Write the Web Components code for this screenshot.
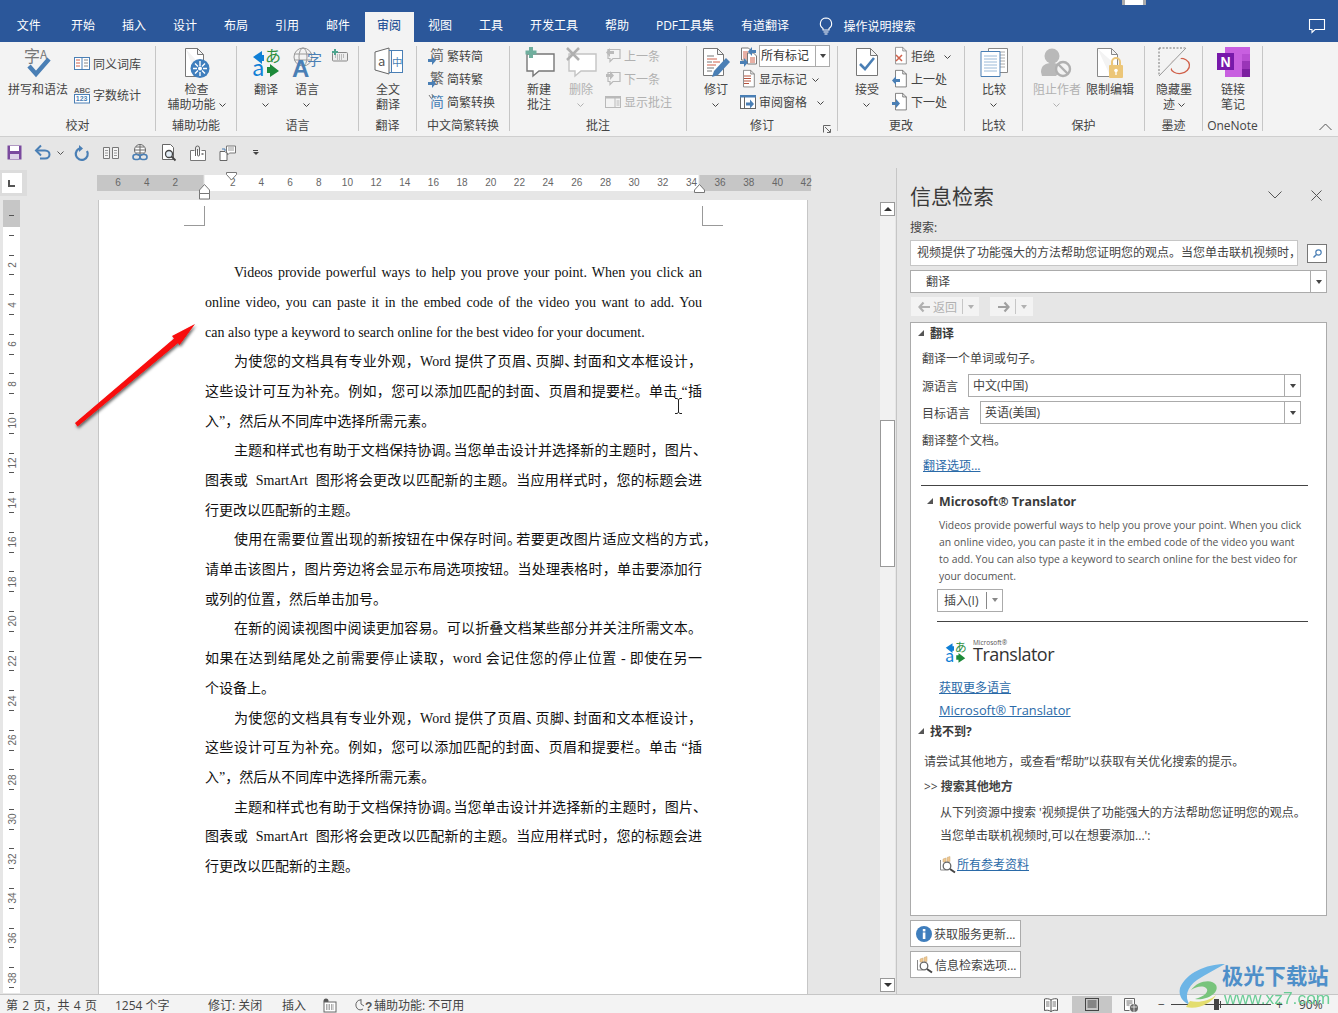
<!DOCTYPE html>
<html lang="zh">
<head>
<meta charset="utf-8">
<title>Word</title>
<style>
  html, body { margin: 0; padding: 0; background: #e6e6e6; }
  body { width: 1338px; height: 1013px; overflow: hidden; font: 12px "Open Sans", "Noto Sans CJK SC", sans-serif; color: #444; }
  /* Word squeezes some punctuation in a justified line */
  .c { letter-spacing: -5px; }
  .c6 { letter-spacing: -6px; }
  .w { margin: 0 4px; }
</style>
</head>
<body>
<word-app>
  <word-tabs></word-tabs>
  <word-ribbon>
    <rb-group w="156" label="校对" pad="8">
      <rb-big w="60" icon="spell" iw="28" ih="32">拼写和语法</rb-big>
      <rb-col style="margin:8px 0 0 6px;gap:8px">
        <rb-small icon="thes">同义词库</rb-small>
        <rb-small icon="abc">字数统计</rb-small>
      </rb-col>
    </rb-group>
    <rb-group w="81" label="辅助功能">
      <rb-big w="80" icon="access" iw="26" ih="32">检查<br>辅助功能 <rb-chev></rb-chev></rb-big>
    </rb-group>
    <rb-group w="122" label="语言" pad="2">
      <rb-big w="54" icon="translate" iw="28" ih="30">翻译<br><rb-chev></rb-chev></rb-big>
      <rb-big w="28" icon="language" iw="32" ih="31">语言<br><rb-chev></rb-chev></rb-big>
      <rb-icon name="keyboard" w="16" h="13" style="margin:5px 0 0 11px"></rb-icon>
    </rb-group>
    <rb-group w="58" label="翻译">
      <rb-big w="57" icon="fulltext" iw="29" ih="29">全文<br>翻译</rb-big>
    </rb-group>
    <rb-group w="93" label="中文简繁转换" pad="11">
      <rb-col>
        <rb-small icon="jian">繁转简</rb-small>
        <rb-small icon="fan">简转繁</rb-small>
        <rb-small icon="jian2">简繁转换</rb-small>
      </rb-col>
    </rb-group>
    <rb-group w="177" label="批注" pad="4">
      <rb-big w="50" icon="newc" iw="31" ih="30">新建<br>批注</rb-big>
      <rb-big w="34" icon="delc" iw="31" ih="30" disabled>删除<br><rb-chev></rb-chev></rb-big>
      <rb-col style="margin-left:7px">
        <rb-small icon="prevc" disabled>上一条</rb-small>
        <rb-small icon="nextc" disabled>下一条</rb-small>
        <rb-small icon="showc" disabled>显示批注</rb-small>
      </rb-col>
    </rb-group>
    <rb-group w="151" label="修订" pad="9" launcher>
      <rb-big w="40" icon="track" iw="28" ih="32">修订<br><rb-chev></rb-chev></rb-big>
      <rb-col style="margin-left:4px">
        <rb-small icon="markup"><rb-drop>所有标记</rb-drop></rb-small>
        <rb-small icon="showm">显示标记<rb-chev style="margin-left:5px"></rb-chev></rb-small>
        <rb-small icon="rpane">审阅窗格<rb-chev style="margin-left:10px"></rb-chev></rb-small>
      </rb-col>
    </rb-group>
    <rb-group w="127" label="更改" pad="9">
      <rb-big w="40" icon="accept" iw="24" ih="30">接受<br><rb-chev></rb-chev></rb-big>
      <rb-col style="margin-left:5px">
        <rb-small icon="reject">拒绝<rb-chev style="margin-left:9px"></rb-chev></rb-small>
        <rb-small icon="prevd">上一处</rb-small>
        <rb-small icon="nextd">下一处</rb-small>
      </rb-col>
    </rb-group>
    <rb-group w="58" label="比较">
      <rb-big w="57" icon="compare" iw="28" ih="30">比较<br><rb-chev></rb-chev></rb-big>
    </rb-group>
    <rb-group w="122" label="保护" pad="9">
      <rb-big w="50" icon="block" iw="32" ih="32" disabled>阻止作者<br><rb-chev></rb-chev></rb-big>
      <rb-big w="56" icon="restrict" iw="28" ih="32">限制编辑</rb-big>
    </rb-group>
    <rb-group w="58" label="墨迹">
      <rb-big w="57" icon="ink" iw="32" ih="30">隐藏墨<br>迹 <rb-chev></rb-chev></rb-big>
    </rb-group>
    <rb-group w="60" label="OneNote">
      <rb-big w="59" icon="onenote" iw="33" ih="30">链接<br>笔记</rb-big>
    </rb-group>
  </word-ribbon>
  <word-qat></word-qat>
  <word-main>
    <doc-area>
      <doc-line indent>Videos provide powerful ways to help you prove your point. When you click an</doc-line>
      <doc-line>online video, you can paste it in the embed code of the video you want to add. You</doc-line>
      <doc-line last>can also type a keyword to search online for the best video for your document.</doc-line>
      <doc-line indent>为使您的文档具有专业外观，Word 提供了页眉<span class="c">、</span>页脚<span class="c">、</span>封面和文本框设计，</doc-line>
      <doc-line>这些设计可互为补充。例如，您可以添加匹配的封面、页眉和提要栏。单击 “插</doc-line>
      <doc-line last>入”，然后从不同库中选择所需元素。</doc-line>
      <doc-line indent>主题和样式也有助于文档保持协调<span class="c6">。</span>当您单击设计并选择新的主题时，图片<span class="c">、</span></doc-line>
      <doc-line>图表或<span class="w"> SmartArt </span>图形将会更改以匹配新的主题。当应用样式时，您的标题会进</doc-line>
      <doc-line last>行更改以匹配新的主题。</doc-line>
      <doc-line indent wide>使用在需要位置出现的新按钮在中保存时间<span class="c">。</span>若要更改图片适应文档的方式，</doc-line>
      <doc-line>请单击该图片，图片旁边将会显示布局选项按钮。当处理表格时，单击要添加行</doc-line>
      <doc-line last>或列的位置，然后单击加号。</doc-line>
      <doc-line indent>在新的阅读视图中阅读更加容易。可以折叠文档某些部分并关注所需文本。</doc-line>
      <doc-line>如果在达到结尾处之前需要停止读取，word 会记住您的停止位置 - 即使在另一</doc-line>
      <doc-line last>个设备上。</doc-line>
      <doc-line indent>为使您的文档具有专业外观，Word 提供了页眉<span class="c">、</span>页脚<span class="c">、</span>封面和文本框设计，</doc-line>
      <doc-line>这些设计可互为补充。例如，您可以添加匹配的封面、页眉和提要栏。单击 “插</doc-line>
      <doc-line last>入”，然后从不同库中选择所需元素。</doc-line>
      <doc-line indent>主题和样式也有助于文档保持协调<span class="c6">。</span>当您单击设计并选择新的主题时，图片<span class="c">、</span></doc-line>
      <doc-line>图表或<span class="w"> SmartArt </span>图形将会更改以匹配新的主题。当应用样式时，您的标题会进</doc-line>
      <doc-line last>行更改以匹配新的主题。</doc-line>
    </doc-area>
    <research-pane></research-pane>
  </word-main>
  <word-status></word-status>
</word-app>

<script>
// all icons drawn by hand, name -> [viewBox w, viewBox h, content]
const blue = '#4a7fb5', grey = '#777', light = '#b9b9b9'
const page = (c = grey) => `<path d="M3.5 .5h10l5 5v18h-15z M13.5 .5v5h5" fill="#fff" stroke="${c}"/>`
const arrowR = (x, y, c = blue) => `<path d="M${x} ${y}h4v-3l4 4.5-4 4.5v-3h-4z" fill="${c}"/>`
const arrowL = (x, y, c = blue) => `<path d="M${x + 8} ${y}h-4v-3l-4 4.5 4 4.5v-3h4z" fill="${c}"/>`
const bubble = (c) => `<path d="M3 8h27v17H15l-6 5v-5H3z" transform="translate(0 -1)" fill="#fff" stroke="${c}" stroke-width="1.4"/>`
const miniBubble = (c) => `<path d="M3 1.5h12v9H8l-3 3v-3H3z" fill="#f3f3f3" stroke="${c}" stroke-width="1.2"/>`
const translateGlyphs = `<path d="M1 10l9-6v4h2v6h-2v3z" fill="#0f7fd6"/><text x="13" y="15" font-size="16" fill="#2f8f3f">あ</text><text x="0" y="29" font-size="22" fill="#0f7fd6">a</text><path d="M27 24l-9 6v-4h-3v-6h3v-3z" fill="#1d8a3a"/>`

const ICONS = {
  spell: [28, 32, `<text x="0" y="15" font-size="16" fill="#777">字</text><text x="16" y="12" font-size="12" fill="#777">A</text><path d="M5 19l7 8L25 12" fill="none" stroke="${blue}" stroke-width="4.4"/>`],
  thes: [16, 16, `<rect x=".5" y="1.5" width="15" height="12" fill="#fff" stroke="${blue}"/><path d="M8 1.5v12" stroke="${blue}"/><path d="M2 4h4M2 7h4M2 10h4" stroke="#d0604a"/><path d="M10 4h4M10 7h4M10 10h4" stroke="#888"/>`],
  abc: [16, 18, `<text x="0" y="7" font-size="7.5" font-weight="700" fill="#666" font-family="Liberation Sans">ABC</text><rect x=".5" y="8.5" width="15" height="8.5" fill="#fff" stroke="${blue}"/><text x="1.8" y="15.4" font-size="7" font-weight="700" fill="${blue}" font-family="Liberation Sans">123</text>`],
  access: [26, 32, `<path d="M1.5 1.5h12l6 6v14M1.5 1.5v28h11M13.5 1.5v6h6" fill="#fff" stroke="${grey}"/><circle cx="16" cy="21.500" r="9.500" fill="#3f7ebd"/><g stroke="#fff" stroke-width="1.400"><path d="M16 14v5M16 25v4M9 21.500h4M19 21.500h4M11 16.500l3 3M21 16.500l-3 3M11 26.500l3-3M21 26.500l-3-3"/></g><circle cx="16" cy="21.500" r="2" fill="#fff"/>`],
  translate: [28, 30, translateGlyphs],
  language: [32, 31, `<circle cx="12" cy="10" r="9" fill="none" stroke="#999"/><ellipse cx="12" cy="10" rx="4" ry="9" fill="none" stroke="#999"/><path d="M3 7h18M3 13h18" stroke="#999"/><text x="1" y="30" font-size="24" font-weight="700" fill="${blue}" font-family="Liberation Sans">A</text><text x="16" y="18" font-size="15" fill="${blue}">字</text>`],
  keyboard: [16, 13, `<rect x=".5" y="3.500" width="15" height="8.500" rx="1" fill="#eee" stroke="#888"/><path d="M3 6h10M3 8h10M5 10h6" stroke="#888" stroke-dasharray="1 1"/><path d="M3 0v6M0 3h6" stroke="#4fa58f" stroke-width="2"/>`],
  fulltext: [29, 29, `<path d="M1 5L15 1v26L1 23z" fill="#fff" stroke="#666"/><text x="4" y="19" font-size="13" fill="#555">a</text><rect x="17.500" y="3.500" width="11" height="22" fill="#fff" stroke="${blue}"/><path d="M15 3.500h3M15 25.500h3" stroke="${blue}"/><text x="18" y="19" font-size="10.500" fill="${blue}">中</text>`],
  jian: [16, 17, `<text x="2" y="13" font-size="14" fill="#666">简</text>${arrowR(0, 12)}`],
  fan: [16, 17, `<text x="2" y="13" font-size="14" fill="#666">繁</text>${arrowR(0, 12)}`],
  jian2: [16, 17, `<text x="2" y="14" font-size="14" fill="${blue}">简</text><path d="M1 2l2 3M4 1l1 4" stroke="#777"/>`],
  newc: [31, 30, bubble('#777') + `<path d="M7 0v11M1.500 5.500h11" stroke="#6fae9d" stroke-width="4"/>`],
  delc: [31, 30, bubble('#c4c4c4') + `<path d="M1 1l12 12M13 1L1 13" stroke="#b0b0b0" stroke-width="2.500"/>`],
  prevc: [16, 16, miniBubble(light) + arrowL(1, 3, '#bbb')],
  nextc: [16, 16, miniBubble(light) + arrowR(1, 3, '#bbb')],
  showc: [16, 16, `<rect x=".5" y="2.500" width="15" height="11" fill="#f3f3f3" stroke="${light}"/><rect x=".5" y="2.500" width="15" height="2" fill="${light}"/><path d="M10 4v9" stroke="${light}"/><path d="M11.500 7h3M11.500 9h3M11.500 11h3" stroke="${light}"/>`],
  track: [28, 32, `<path d="M1.500 1.500h14l6 6v21h-20zM15.500 1.500v6h6" fill="#fff" stroke="#777"/><path d="M5 9h7M5 15h5" stroke="#777"/><path d="M5 12h10M11 15h7M5 18h9" stroke="#d0604a"/><path d="M5 21h7M5 24h5" stroke="#777"/><path d="M10 30l2-6L24 11l4 4-12 13z" fill="${blue}"/>`],
  markup: [17, 18, `<path d="M1.500 1h7l3 3v9h-10z" fill="#fff" stroke="#777"/><path d="M3 5h5M3 7h5M3 9h5M3 11h5" stroke="#d0604a"/><path d="M7.500 6h6l3 3v8h-9z" fill="#fff" stroke="#777"/><path d="M10 11h5M10 13h5M10 15h5" stroke="#d0604a"/>${arrowL(8, 3)}${arrowR(0, 14)}`],
  showm: [16, 18, `<g transform="translate(1 0) scale(.72)">${page('#666')}</g><path d="M4 6h7M4 8.500h7M4 11h7M4 13.500h5" stroke="#b5523d"/>`],
  rpane: [16, 16, `<rect x=".5" y="1.500" width="15" height="13" fill="#fff" stroke="#666"/><rect x="0" y="1" width="16" height="2.500" fill="${blue}"/><path d="M4.500 3v11" stroke="#666"/>${arrowR(6, 8.500)}`],
  accept: [24, 30, `<path d="M1.500 1.500h14l7 7v20h-21zM15.500 1.500v7h7" fill="#fff" stroke="#777"/><path d="M5 17l5 5 9-11" fill="none" stroke="${blue}" stroke-width="2.600"/>`],
  reject: [16, 18, `<g transform="translate(1 0) scale(.72)">${page('#777')}</g><path d="M4 8l6 6M10 8l-6 6" stroke="#d0604a" stroke-width="1.500"/>`],
  prevd: [16, 18, `<g transform="translate(1 0) scale(.72)">${page('#555')}</g>${arrowL(0, 9)}`],
  nextd: [16, 18, `<g transform="translate(1 0) scale(.72)">${page('#555')}</g>${arrowR(0, 9)}`],
  compare: [28, 30, `<path d="M8.500 1.500h19v24h-19z" fill="#fff" stroke="#888"/><path d="M20 5h5M20 8h5M20 11h5M20 14h5M20 17h5M20 20h5" stroke="#aaa"/><path d="M1 4.500h19v25H1z" fill="#fff" stroke="${blue}"/><path d="M4 9h13M4 12h13M4 15h13M4 18h13M4 21h13M4 24h13" stroke="#9bbad8"/>`],
  block: [32, 32, `<circle cx="11" cy="9" r="7.500" fill="#b9b9b9"/><path d="M0 25c0-7 5-9 11-9s9 2 10 6l-6 7H1z" fill="#b9b9b9"/><circle cx="22" cy="22" r="7" fill="#f3f3f3" stroke="#b0b0b0" stroke-width="2.400"/><path d="M17 17l10 10" stroke="#b0b0b0" stroke-width="2.400"/>`],
  restrict: [28, 32, `<path d="M1.500 1.500h14l6 6v12M1.500 1.500v28h13M15.500 1.500v6h6" fill="#fff" stroke="#888"/><rect x="13" y="18" width="14" height="13" rx="1" fill="#ecc678"/><path d="M16 18v-3a4 4 0 018 0v3" fill="none" stroke="#ecc678" stroke-width="2"/><circle cx="20" cy="23.500" r="1.800" fill="#fff"/><path d="M20 24v4" stroke="#fff" stroke-width="1.300"/>`],
  ink: [32, 30, `<path d="M1 1h27M1 1v28" stroke="#777" stroke-dasharray="2 1.500" fill="none"/><ellipse cx="22" cy="19" rx="9.500" ry="7.500" fill="none" stroke="#d0604a" stroke-width="1.300" transform="rotate(-8 22 19)"/><path d="M2 30L29 2" stroke="#f3f3f3" stroke-width="4"/><path d="M1 29L28 1" stroke="#999"/>`],
  onenote: [33, 30, `<rect x="8" y="0" width="25" height="30" fill="#c85fe0"/><rect x="25" y="7" width="8" height="7" fill="#b84fd2"/><rect x="25" y="14" width="8" height="8" fill="#9a35b8"/><rect x="25" y="22" width="8" height="8" fill="#7c1fa0"/><rect x="0" y="6" width="17" height="17" fill="#7719aa"/><text x="3.500" y="19.500" font-size="14" font-weight="700" fill="#fff" font-family="Liberation Sans">N</text>`],
  save: [15, 15, `<path d="M.5.5h14v14H.5z" fill="#7a4a9e"/><rect x="3" y="1" width="9" height="5" fill="#fff"/><rect x="3" y="9" width="9" height="5" fill="#ded3e8"/>`],
  undo: [16, 15, `<path d="M1.500 5.500H10c6 0 6 8 0 8H5" fill="none" stroke="${blue}" stroke-width="2"/><path d="M6 .5L1 5.500l5 5" fill="none" stroke="${blue}" stroke-width="2"/>`],
  redo: [16, 16, `<path d="M7 3a6 6 0 106 3" fill="none" stroke="${blue}" stroke-width="2.200"/><path d="M9 0v7L5 3.500z" fill="${blue}" transform="rotate(180 7 3.500)"/>`],
  cols: [16, 14, `<path d="M.5 1.500h6v11h-6zM9.500 1.500h6v11h-6z" fill="#f5f5f5" stroke="#777"/><path d="M2 4.500h3M2 7h3M2 9.500h3M11 4.500h3M11 7h3M11 9.500h3" stroke="#999"/>`],
  globe: [16, 17, `<circle cx="8" cy="6" r="5.500" fill="#fff" stroke="#666"/><path d="M2.500 6h11M8 .5v11M4 3h8M4 9h8" stroke="#666"/><rect x="1" y="10.500" width="7" height="5" rx="2.500" fill="none" stroke="${blue}" stroke-width="1.600"/><rect x="8" y="10.500" width="7" height="5" rx="2.500" fill="none" stroke="${blue}" stroke-width="1.600"/>`],
  docfind: [16, 17, `<path d="M1.500 .5h8l3 3v12h-11z" fill="#fff" stroke="#666"/><circle cx="8" cy="10" r="3.500" fill="#e4eef7" stroke="#444" stroke-width="1.300"/><path d="M10.500 12.500l4 4" stroke="#444" stroke-width="1.800"/>`],
  clip: [16, 16, `<path d="M.5 5.500h4M11.500 5.500h4v10H.5v-10" fill="#fff" stroke="#777"/><path d="M5.500 11V3a2 2 0 014 0v7a1 1 0 01-2 0V4" fill="none" stroke="#666"/><rect x="11.500" y="8" width="2" height="2" fill="#888"/>`],
  cmtdoc: [17, 16, `<path d="M1 6.500h5l2 2v7H1z" fill="#fff" stroke="#666"/><path d="M7.500 1h9v7h-6l-2 2v-2h-1z" fill="#fff" stroke="#777"/><path d="M9 3h6M9 5h6" stroke="#999"/><path d="M3 4h3v2" fill="none" stroke="${blue}"/>`],
  proof: [14, 14, `<circle cx="3" cy="3" r="2.500" fill="#555"/><rect x="1" y="4" width="12" height="10" fill="#fff" stroke="#666"/><path d="M3 7h8M3 9h8M3 11h8" stroke="#555" stroke-dasharray="1.500 1"/>`],
  a11y: [18, 14, `<path d="M5 2a4.500 5 0 102 9" fill="none" stroke="#666"/><path d="M5 1v5l3 2" fill="none" stroke="#666"/><text x="9" y="13" font-size="12" font-weight="700" fill="#555" font-family="Liberation Sans">?</text>`],
  read: [14, 14, `<path d="M7 2C5 .5 2 .5 .5 1v11.500c2-.5 4.500-.5 6.500 1 2-1.500 4.500-1.500 6.500-1V1C12 .5 9 .5 7 2zM7 2v11.500" fill="#fff" stroke="#555"/><path d="M2 4h3.500M2 6h3.500M2 8h3.500M8.500 4H12M8.500 6H12M8.500 8H12" stroke="#777"/>`],
  layout: [14, 13, `<rect x=".5" y=".5" width="13" height="12" fill="none" stroke="#444"/><path d="M2.500 3h9M2.500 5h9M2.500 7h9M2.500 9h9" stroke="#444"/>`],
  web: [14, 14, `<path d="M.5.5h10v8M.5.5v12h5" fill="#fff" stroke="#666"/><path d="M2.500 3h6M2.500 5h6M2.500 7h3" stroke="#777"/><circle cx="10" cy="10" r="4" fill="#666"/><path d="M7 9h6M10 6v8" stroke="#fff" stroke-width=".7"/>`],
  refs: [17, 17, `<path d="M1.500 4v10h5" fill="none" stroke="#888"/><path d="M4 3l3-1v4H4zM8 1.500l3-1v5H8z" fill="#f0c890" stroke="#c9a97a" stroke-width=".5"/><circle cx="8" cy="10" r="3.800" fill="#fff" stroke="#666" stroke-width="1.300"/><path d="M11 13l5 3.500" stroke="#444" stroke-width="2"/>`],
  info: [16, 16, `<circle cx="8" cy="8" r="8" fill="#3f7ebd"/><rect x="6.800" y="6.500" width="2.600" height="6.500" fill="#fff"/><rect x="6.800" y="3" width="2.600" height="2.400" fill="#fff"/>`],
  bulb: [14, 18, `<path d="M7 1a5.700 5.700 0 00-3 10.500V13h6v-1.500A5.700 5.700 0 007 1z" fill="none" stroke="#fff" stroke-width="1.100"/><path d="M4.500 15h5M5.500 17h3" stroke="#fff" stroke-width="1.100"/>`],
  chat: [17, 15, `<path d="M.5.5h15v10H6l-3 3v-3H.5z" fill="none" stroke="#fff" stroke-width="1.100"/>`],
  search: [9, 9, `<circle cx="5.500" cy="3.500" r="2.700" fill="none" stroke="${blue}" stroke-width="1.200"/><path d="M3.500 5.500L.5 8.500" stroke="${blue}" stroke-width="1.500"/>`],
  back: [12, 10, `<path d="M5.500 .5L1.500 5l4 4.500M2 5h10" fill="none" stroke="#b1b1b1" stroke-width="2.200"/>`],
  fwd: [12, 10, `<path d="M6.500 .5l4 4.500-4 4.500M10 5H0" fill="none" stroke="#a0a0a0" stroke-width="2.200"/>`]
}

class RbIcon extends HTMLElement {
  connectedCallback() {
    if (this.shadowRoot) return
    const icon = ICONS[this.getAttribute('name')]
    const w = this.getAttribute('w') || icon[0]
    const h = this.getAttribute('h') || icon[1]
    this.attachShadow({ mode: 'open' })
    this.shadowRoot.innerHTML = `
      <style>
        :host{ display:inline-block; flex:none; width:${w}px; height:${h}px; line-height:0; font-family:"Noto Sans CJK SC",sans-serif; }
        svg{ overflow:visible; display:block; }
      </style>
      <svg width="${w}" height="${h}" viewBox="0 0 ${icon[0]} ${icon[1]}">${icon[2]}</svg>`
  }
}
customElements.define('rb-icon', RbIcon)

class RbChev extends HTMLElement {
  constructor() {
    super()
    this.attachShadow({ mode: 'open' })
    this.shadowRoot.innerHTML = `
      <style>:host{ display:inline-block; width:7px; height:4px; vertical-align:middle; }</style>
      <svg width="7" height="4" style="display:block"><path d="M.5.5L3.500 3.500 6.500.5" fill="none" stroke="currentColor"/></svg>`
  }
}
customElements.define('rb-chev', RbChev)

class WordApp extends HTMLElement {
  constructor() {
    super()
    this.attachShadow({ mode: 'open' })
    this.shadowRoot.innerHTML = `
      <style>
        :host{ display:flex; flex-direction:column; position:relative; width:1338px; height:1013px; overflow:hidden; }
        .mark{ position:absolute; left:1178px; top:961px; width:160px; height:52px; pointer-events:none; }
        .mark svg{ position:absolute; left:0; top:2px; }
        .site{ position:absolute; left:44px; top:0; font:700 21.300px/28px "Noto Sans CJK SC",sans-serif; color:#4e8fc9; white-space:nowrap; }
        .url{ position:absolute; left:46px; top:27px; font:400 17.400px/20px "Liberation Sans",sans-serif; color:#5cc98c; white-space:nowrap; opacity:.9; }
      </style>
      <slot></slot>
      <div class="mark">
        <svg width="50" height="46" viewBox="0 0 50 46">
          <path d="M47 1C28 1 8 10 2 25c-2 8 3 14 10 17C6 34 9 24 19 17 28 11 38 6 47 1z" fill="#6db5e6"/>
          <path d="M13 27c6-9 21-12 25-5 4 8-10 16-21 14 9-2 15-8 11-11-4-3-10-1-15 2z" fill="#78c47c"/>
          <path d="M8 44c12 3 26-4 30-12-6 6-18 8-26 6z" fill="#e3dd6e"/>
        </svg>
        <div class="site">极光下载站</div>
        <div class="url">www.xz7.com</div>
      </div>`
  }
}
customElements.define('word-app', WordApp)

class WordTabs extends HTMLElement {
  constructor() {
    super()
    this.attachShadow({ mode: 'open' })
    const tabs = [['文件', 57.5], ['开始', 51], ['插入', 51], ['设计', 51], ['布局', 51], ['引用', 51], ['邮件', 51], ['审阅', 51], ['视图', 51], ['工具', 51], ['开发工具', 75], ['帮助', 51], ['PDF工具集', 85], ['有道翻译', 75]]
    this.shadowRoot.innerHTML = `
      <style>
        :host{ display:flex; flex:none; height:42px; background:#2b579a; color:#fff; align-items:flex-end; position:relative; font-size:12px; }
        .tab{ height:30px; line-height:28px; text-align:center; flex:none; box-sizing:border-box; }
        .tab:first-child{ padding-right:3px; }
        .tab.on{ background:#f3f3f3; color:#2b579a; margin:0 1px; font-weight:500; }
        .help{ display:flex; align-items:center; gap:11px; height:30px; margin-left:16px; padding-bottom:2px; box-sizing:border-box; }
        .chat{ margin-left:auto; margin-right:12px; height:30px; padding-top:7px; box-sizing:border-box; }
        .win{ position:absolute; left:1122px; top:0; width:24px; height:5px; background:linear-gradient(90deg,#aaa 3px,#fff 3px,#fff 21px,#aaa 21px); }
      </style>
      ${tabs.map(t => {
        const on = t[0] === '审阅'
        return `<div class="tab${on ? ' on' : ''}" style="width:${on ? t[1] - 2 : t[1]}px">${t[0]}</div>`
      }).join('')}
      <div class="help"><rb-icon name="bulb"></rb-icon><span>操作说明搜索</span></div>
      <div class="chat"><rb-icon name="chat"></rb-icon></div>
      <div class="win"></div>`
  }
}
customElements.define('word-tabs', WordTabs)

class WordRibbon extends HTMLElement {
  constructor() {
    super()
    this.attachShadow({ mode: 'open' })
    this.shadowRoot.innerHTML = `
      <style>
        :host{ display:flex; flex:none; height:95px; box-sizing:border-box; padding-top:2px; background:#f3f3f3; border-bottom:1px solid #cfcfcf; position:relative; color:#444; }
        .up{ position:absolute; left:1319px; top:81px; }
      </style>
      <slot></slot>
      <svg class="up" width="13" height="8"><path d="M.5 7L6.500 1 12.500 7" fill="none" stroke="#555"/></svg>`
  }
}
customElements.define('word-ribbon', WordRibbon)

class RbGroup extends HTMLElement {
  constructor() {
    super()
    this.attachShadow({ mode: 'open' })
    const launcher = this.hasAttribute('launcher')
    this.shadowRoot.innerHTML = `
      <style>
        :host{ display:block; flex:none; position:relative; box-sizing:border-box; width:${this.getAttribute('w')}px; height:88px; }
        :host::after{ content:""; position:absolute; right:0; top:2px; bottom:1px; width:1px; background:#c6c6c6; }
        .items{ display:flex; align-items:flex-start; justify-content:${this.hasAttribute('pad') ? 'flex-start' : 'center'}; height:74px; padding-left:${this.getAttribute('pad') || 0}px; box-sizing:border-box; }
        .label{ height:15px; line-height:15px; text-align:center; padding-right:1px; white-space:nowrap; }
        .launch{ position:absolute; right:7px; bottom:-1px; }
      </style>
      <div class="items"><slot></slot></div>
      <div class="label">${this.getAttribute('label')}</div>
      ${launcher ? `<svg class="launch" width="8" height="8"><path d="M.5 7.500v-7h7M2 2l5 5M7.500 4v3.500H4" fill="none" stroke="#666"/></svg>` : ''}`
  }
}
customElements.define('rb-group', RbGroup)

class RbBig extends HTMLElement {
  constructor() {
    super()
    this.attachShadow({ mode: 'open' })
    const dis = this.hasAttribute('disabled')
    this.shadowRoot.innerHTML = `
      <style>
        :host{ display:flex; flex:none; flex-direction:column; align-items:center; width:${this.getAttribute('w')}px; color:${dis ? '#b1b1b1' : '#444'}; }
        .ic{ height:37.5px; display:flex; align-items:flex-start; padding-top:3px; box-sizing:border-box; }
        .tx{ line-height:15px; text-align:center; white-space:nowrap; }
      </style>
      <div class="ic"><rb-icon name="${this.getAttribute('icon')}" w="${this.getAttribute('iw')}" h="${this.getAttribute('ih')}"></rb-icon></div>
      <div class="tx"><slot></slot></div>`
  }
}
customElements.define('rb-big', RbBig)

class RbCol extends HTMLElement {
  constructor() {
    super()
    this.attachShadow({ mode: 'open' })
    this.shadowRoot.innerHTML = `
      <style>:host{ display:flex; flex:none; flex-direction:column; }</style>
      <slot></slot>`
  }
}
customElements.define('rb-col', RbCol)

class RbSmall extends HTMLElement {
  constructor() {
    super()
    this.attachShadow({ mode: 'open' })
    const dis = this.hasAttribute('disabled')
    this.shadowRoot.innerHTML = `
      <style>
        :host{ display:flex; align-items:center; height:23px; gap:3px; white-space:nowrap; color:${dis ? '#b1b1b1' : '#444'}; }
        .ic{ width:16px; display:flex; justify-content:center; }
      </style>
      <div class="ic"><rb-icon name="${this.getAttribute('icon')}"></rb-icon></div>
      <div><slot></slot></div>`
  }
}
customElements.define('rb-small', RbSmall)

class RbDrop extends HTMLElement {
  constructor() {
    super()
    this.attachShadow({ mode: 'open' })
    this.shadowRoot.innerHTML = `
      <style>
        :host{ display:flex; width:71px; height:22px; box-sizing:border-box; background:#fff; border:1px solid #ababab; color:#333; line-height:20px; }
        .t{ flex:1; padding-left:1px; }
        .b{ width:13px; border-left:1px solid #ababab; display:flex; align-items:center; justify-content:center; }
        .b i{ border:3px solid transparent; border-top:4px solid #444; border-bottom:0; }
      </style>
      <div class="t"><slot></slot></div>
      <div class="b"><i></i></div>`
  }
}
customElements.define('rb-drop', RbDrop)

class WordQat extends HTMLElement {
  constructor() {
    super()
    this.attachShadow({ mode: 'open' })
    const items = [['save', 7], ['undo', 13], ['redo', 10], ['cols', 13], ['globe', 13], ['docfind', 13], ['clip', 13], ['cmtdoc', 13]]
    this.shadowRoot.innerHTML = `
      <style>
        :host{ display:flex; flex:none; align-items:center; height:31px; background:#e6e6e6; color:#555; }
        rb-icon{ display:block; }
        .ch{ margin-left:6px; width:7px; }
        .dd{ margin-left:16px; width:7px; display:flex; flex-direction:column; align-items:center; gap:1px; }
        .dd b{ width:5px; height:1px; background:#444; }
        .dd i{ border:3px solid transparent; border-top:3px solid #444; border-bottom:0; }
      </style>
      ${items.map(i => `<rb-icon name="${i[0]}" style="margin-left:${i[1]}px"></rb-icon>${i[0] === 'undo' ? '<rb-chev class="ch"></rb-chev>' : ''}`).join('')}
      <div class="dd"><b></b><i></i></div>`
  }
}
customElements.define('word-qat', WordQat)

class WordMain extends HTMLElement {
  constructor() {
    super()
    this.attachShadow({ mode: 'open' })
    this.shadowRoot.innerHTML = `
      <style>:host{ display:flex; flex:none; height:826px; }</style>
      <slot></slot>`
  }
}
customElements.define('word-main', WordMain)

class HRuler extends HTMLElement {
  constructor() {
    super()
    this.attachShadow({ mode: 'open' })
    const nums = [6, 4, 2, '']
    for (let n = 2; n <= 42; n += 2) nums.push(n)
    this.shadowRoot.innerHTML = `
      <style>
        :host{ display:block; position:relative; width:714px; height:16px; margin-left:97px; background:linear-gradient(90deg,#c6c6c6 106px,#fff 108px,#fff 601px,#c6c6c6 603px); color:#666; }
        .nums{ display:flex; padding-left:6.7px; font:10px/16px "Liberation Sans",sans-serif; }
        .nums span{ width:28.68px; flex:none; text-align:center; }
        svg{ position:absolute; overflow:visible; }
      </style>
      <div class="nums">${nums.map(n => `<span>${n}</span>`).join('')}</div>
      <svg style="left:129px;top:-3px" width="11" height="11"><path d="M.5.5h10v2L5.500 8 .5 2.500z" fill="#fff" stroke="#777"/></svg>
      <svg style="left:102px;top:9px" width="11" height="16"><path d="M.5 6L5.500 .5l5 5.500v3.500H.5zM.5 9.500h10v5.500H.5z" fill="#fff" stroke="#777"/></svg>
      <svg style="left:597px;top:9px" width="11" height="9"><path d="M.5 6L5.500 .5l5 5.500v2.500H.5z" fill="#fff" stroke="#777"/></svg>`
  }
}
customElements.define('h-ruler', HRuler)

class VRuler extends HTMLElement {
  constructor() {
    super()
    this.attachShadow({ mode: 'open' })
    let cells = ''
    for (let n = 2; n <= 38; n += 2) cells += `<div class="cell"><i></i><span>${n}</span><i></i></div>`
    this.shadowRoot.innerHTML = `
      <style>
        :host{ display:block; width:17px; margin-left:3px; height:793px; overflow:hidden; background:#fff; color:#666; font:10px "Liberation Sans",sans-serif; flex:none; }
        .top{ height:27px; background:#c6c6c6; display:flex; align-items:center; justify-content:center; padding-top:3px; box-sizing:border-box; }
        .pre{ height:18.2px; display:flex; align-items:center; justify-content:center; padding-bottom:2px; box-sizing:border-box; }
        i{ display:block; width:5px; height:1px; background:#555; }
        .cell{ height:39.6px; display:flex; flex-direction:column; align-items:center; justify-content:space-between; padding:9.4px 0; box-sizing:border-box; position:relative; }
        .cell span{ position:absolute; top:50%; left:50%; transform:translate(-50%,-50%) rotate(-90deg); }
      </style>
      <div class="top"><i></i></div>
      <div class="pre"><i></i></div>
      ${cells}`
  }
}
customElements.define('v-ruler', VRuler)

class DocScroll extends HTMLElement {
  constructor() {
    super()
    this.attachShadow({ mode: 'open' })
    this.shadowRoot.innerHTML = `
      <style>
        :host{ display:flex; flex-direction:column; flex:none; width:15px; height:790px; margin-top:2px; background:#f1f1f1; }
        .btn{ height:14px; box-sizing:border-box; background:#fff; border:1px solid #999; display:flex; align-items:center; justify-content:center; }
        .up i{ border:4px solid transparent; border-bottom:4px solid #333; border-top:0; }
        .dn i{ border:4px solid transparent; border-top:4px solid #333; border-bottom:0; }
        .track{ flex:1; padding-top:204px; box-sizing:border-box; }
        .thumb{ height:147px; background:#fff; border:1px solid #999; box-sizing:border-box; }
      </style>
      <div class="btn up"><i></i></div>
      <div class="track"><div class="thumb"></div></div>
      <div class="btn dn"><i></i></div>`
  }
}
customElements.define('doc-scroll', DocScroll)

class DocArea extends HTMLElement {
  constructor() {
    super()
    this.attachShadow({ mode: 'open' })
    this.shadowRoot.innerHTML = `
      <style>
        :host{ display:block; position:relative; flex:none; width:897px; box-sizing:border-box; border-right:1px solid #c6c6c6; background:#e6e6e6; }
        .corner{ position:absolute; left:0; top:2px; width:27px; height:26px; background:#dcdcdc; display:flex; align-items:center; justify-content:center; }
        .corner div{ width:20px; height:20px; background:#fff; display:flex; align-items:center; justify-content:center; margin-right:3px; }
        .corner svg{ display:block; }
        .rule{ height:32px; padding-top:7px; box-sizing:border-box; }
        .row{ display:flex; height:794px; align-items:flex-start; }
        .page{ position:relative; flex:none; box-sizing:border-box; width:710px; height:794px; margin-left:78px; background:#fff; border-left:1px solid #c6c6c6; border-right:1px solid #c6c6c6; padding:58.200px 0 0 106px; color:#000; }
        .text{ width:497px; }
        .crop{ position:absolute; top:6px; width:21px; height:20px; box-sizing:border-box; border-bottom:1px solid #999; }
        .crop.l{ left:85px; border-right:1px solid #999; }
        .crop.r{ left:603px; border-left:1px solid #999; }
        .cursor{ position:absolute; left:575px; top:198px; }
        doc-scroll{ margin-left:72px; }
        .arrow{ position:absolute; left:70px; top:150px; pointer-events:none; }
      </style>
      <div class="corner"><div><svg width="8" height="8"><path d="M1 1v6h6" fill="none" stroke="#555" stroke-width="2"/></svg></div></div>
      <div class="rule"><h-ruler></h-ruler></div>
      <div class="row">
        <v-ruler></v-ruler>
        <div class="page">
          <div class="crop l"></div><div class="crop r"></div>
          <div class="text"><slot></slot></div>
          <svg class="cursor" width="9" height="16"><path d="M1 .5h2l1.500 1L6 .5h2M4.500 1.500v13M1 15.500h2l1.500-1 1.500 1h2" fill="none" stroke="#222"/></svg>
        </div>
        <doc-scroll></doc-scroll>
      </div>
      <svg class="arrow" width="135" height="115">
        <defs><filter id="s" x="-20%" y="-20%" width="150%" height="150%"><feDropShadow dx="1" dy="2" stdDeviation="1.500" flood-color="#000" flood-opacity=".6"/></filter></defs>
        <path d="M7.500 108.500L108 25l1.500 2L125 6l-23 12 2 2.500L5 105z" fill="#f80808" filter="url(#s)"/>
      </svg>`
  }
}
customElements.define('doc-area', DocArea)

class DocLine extends HTMLElement {
  constructor() {
    super()
    this.attachShadow({ mode: 'open' })
    const last = this.hasAttribute('last')
    this.shadowRoot.innerHTML = `
      <style>
        :host{ display:block; height:29.7px; font:14px/29.7px "Liberation Serif","Noto Sans CJK SC",serif; color:#111;
          text-align:${last ? 'left' : 'justify'}; text-align-last:${last ? 'left' : 'justify'};
          padding-left:${this.hasAttribute('indent') ? 29 : 0}px; margin-right:${this.hasAttribute('wide') ? -15 : 0}px; }
      </style>
      <slot></slot>`
  }
}
customElements.define('doc-line', DocLine)

class PaneSelect extends HTMLElement {
  constructor() {
    super()
    this.attachShadow({ mode: 'open' })
    this.shadowRoot.innerHTML = `
      <style>
        :host{ display:flex; box-sizing:border-box; height:23px; background:#fff; border:1px solid #ababab; line-height:21px; color:#444; }
        .t{ flex:1; padding-left:var(--pad,4px); }
        .b{ width:15px; border-left:1px solid #ababab; display:flex; align-items:center; justify-content:center; }
        .b i{ border:3.500px solid transparent; border-top:4px solid #444; border-bottom:0; }
      </style>
      <div class="t"><slot></slot></div>
      <div class="b"><i></i></div>`
  }
}
customElements.define('pane-select', PaneSelect)

class PaneLink extends HTMLElement {
  constructor() {
    super()
    this.attachShadow({ mode: 'open' })
    this.shadowRoot.innerHTML = `
      <style>:host{ color:#2a6aa8; text-decoration:underline; }</style>
      <slot></slot>`
  }
}
customElements.define('pane-link', PaneLink)

class PaneButton extends HTMLElement {
  constructor() {
    super()
    this.attachShadow({ mode: 'open' })
    this.shadowRoot.innerHTML = `
      <style>
        :host{ display:flex; align-items:center; gap:2px; box-sizing:border-box; width:111px; height:27px; padding-left:5px; background:#fff; border:1px solid #ababab; color:#444; white-space:nowrap; }
      </style>
      <rb-icon name="${this.getAttribute('icon')}"></rb-icon><slot></slot>`
  }
}
customElements.define('pane-button', PaneButton)

class ResearchPane extends HTMLElement {
  constructor() {
    super()
    this.attachShadow({ mode: 'open' })
    // row helper: top gap, height, left indent
    const r = (mt, h, pl, html, cls = '') => `<div class="r ${cls}" style="margin-top:${mt}px;height:${h}px;line-height:${h}px;padding-left:${pl}px">${html}</div>`
    const tri = (x) => `<i class="tri" style="left:${x}px"></i>`
    this.shadowRoot.innerHTML = `
      <style>
        :host{ display:block; flex:none; width:441px; box-sizing:border-box; padding:0 11px 0 13px; margin-top:4px; color:#444; position:relative; }
        .head{ display:flex; align-items:center; height:40px; padding-top:6px; box-sizing:border-box; }
        .head h1{ margin:0; flex:1; font:400 21px/30px "Noto Sans CJK SC",sans-serif; color:#3a3a3a; }
        .head svg{ display:block; }
        .r{ white-space:nowrap; position:relative; }
        .lab{ height:17px; line-height:17px; margin-top:7px; }
        .search{ display:flex; justify-content:space-between; align-items:center; margin-top:4px; }
        .input{ width:388px; height:26px; box-sizing:border-box; background:#fff; border:1px solid #c6c6c6; line-height:23px; padding-left:6px; white-space:nowrap; }
        .go{ width:20px; height:19px; box-sizing:border-box; background:#fff; border:1px solid #777; display:flex; align-items:center; justify-content:center; }
        .main{ margin-top:4px; --pad:15px; }
        .nav{ display:flex; margin-top:4px; margin-left:1px; height:19px; color:#b1b1b1; }
        .navb{ display:flex; align-items:center; background:#f3f3f3; height:19px; box-sizing:border-box; gap:3px; }
        .navb i{ border:3px solid transparent; border-top:4px solid #b1b1b1; border-bottom:0; margin:0 0 0 2px; }
        .navb u{ width:1px; height:15px; background:#c6c6c6; margin-left:2px; }
        .box{ margin-top:6px; height:594px; box-sizing:border-box; background:#fff; border:1px solid #ababab; overflow:hidden; padding-top:1px; }
        .tri{ position:absolute; top:6px; width:0; height:0; border-left:6px solid transparent; border-bottom:6px solid #555; }
        .b{ font-weight:700; color:#3a3a3a; }
        hr{ border:0; height:1px; background:#444; margin:0; }
        .sel{ display:flex; align-items:center; }
        .en{ font:10.400px/17px "Open Sans",sans-serif; color:#555; padding-left:28px; width:365px; }
        .ins{ display:flex; width:66px; height:23px; box-sizing:border-box; border:1px solid #ababab; line-height:21px; margin-left:26px; background:#fff; }
        .ins span{ padding-left:6px; width:42px; }
        .ins u{ width:1px; height:17px; margin-top:2px; background:#888; }
        .ins i{ margin:8px 0 0 5px; width:0; height:0; border:3.500px solid transparent; border-top:4px solid #888; border-bottom:0; }
        .logo{ display:flex; gap:7px; padding-left:34px; position:relative; height:25px; }
        .logo .ms{ position:absolute; left:62px; top:-1px; font:400 6.500px/8px "Open Sans",sans-serif; color:#555; }
        .logo .tr{ font:400 18px/25px "Open Sans",sans-serif; color:#333; letter-spacing:-.5px; margin-top:2px; }
        .foot{ margin-top:4px; display:flex; flex-direction:column; gap:4px; }
      </style>
      <div class="head">
        <h1>信息检索</h1>
        <svg width="14" height="8" style="margin-right:29px"><path d="M.5.5L7 7l6.500-6.500" fill="none" stroke="#555"/></svg>
        <svg width="11" height="11" style="margin-right:5px"><path d="M.5.5l10 10M10.500.5l-10 10" stroke="#555"/></svg>
      </div>
      <div class="lab">搜索:</div>
      <div class="search">
        <div class="input">视频提供了功能强大的方法帮助您证明您的观点。当您单击联机视频时，</div>
        <div class="go"><rb-icon name="search"></rb-icon></div>
      </div>
      <pane-select class="main">翻译</pane-select>
      <div class="nav">
        <div class="navb" style="width:68px;padding-left:7px"><rb-icon name="back"></rb-icon>返回<u></u><i></i></div>
        <div class="navb" style="width:43px;margin-left:11px;padding-left:8px"><rb-icon name="fwd"></rb-icon><u></u><i></i></div>
      </div>
      <div class="box">
        ${r(0, 20, 19, '翻译', 'b')}
        ${r(5, 20, 11, '翻译一个单词或句子。')}
        <div class="sel" style="margin:5px 0 0 11px;width:379px">源语言<pane-select style="margin-left:10px;flex:1">中文(中国)</pane-select></div>
        <div class="sel" style="margin:4px 0 0 11px;width:379px">目标语言<pane-select style="margin-left:10px;flex:1">英语(美国)</pane-select></div>
        ${r(7, 20, 11, '翻译整个文档。')}
        ${r(5, 20, 12, '<pane-link>翻译选项...</pane-link>')}
        <hr style="margin:9px 18px 0 10px">
        ${r(6, 20, 28, '<span style="font-family:\'Open Sans\';font-size:12.400px">Microsoft® Translator</span>', 'b')}
        <div class="en" style="margin-top:5px">Videos provide powerful ways to help you prove your point. When you click an online video, you can paste it in the embed code of the video you want to add. You can also type a keyword to search online for the best video for your document.</div>
        <div class="ins" style="margin-top:3.500px"><span>插入(I)</span><u></u><i></i></div>
        <hr style="margin:9px 18px 0 26px">
        <div class="logo" style="margin-top:18px"><rb-icon name="translate" w="21" h="23"></rb-icon><div class="tr">Translator</div><div class="ms">Microsoft®</div></div>
        ${r(13, 20, 28, '<pane-link>获取更多语言</pane-link>')}
        ${r(2, 20, 28, '<pane-link style="font-family:\'Open Sans\';font-size:12.800px">Microsoft® Translator</pane-link>')}
        ${r(2, 20, 19, '找不到?', 'b')}
        ${r(10, 20, 13, '请尝试其他地方，或查看“帮助”以获取有关优化搜索的提示。')}
        ${r(5, 20, 13, '&gt;&gt; <b>搜索其他地方</b>')}
        ${r(6, 20, 29, "从下列资源中搜索 '视频提供了功能强大的方法帮助您证明您的观点。")}
        ${r(3, 20, 29, "当您单击联机视频时,可以在想要添加...':")}
        <div class="r" style="margin-top:9px;height:20px;line-height:20px;padding-left:28px;display:flex;align-items:center;gap:1px"><rb-icon name="refs"></rb-icon><pane-link>所有参考资料</pane-link></div>
      </div>
      <div class="foot">
        <pane-button icon="info">获取服务更新...</pane-button>
        <pane-button icon="refs">信息检索选项...</pane-button>
      </div>`
    const rows = this.shadowRoot.querySelector('.box').querySelectorAll('.r')
    // collapse triangles next to the three section titles
    rows[0].insertAdjacentHTML('afterbegin', tri(7))
    rows[4].insertAdjacentHTML('afterbegin', tri(16))
    rows[7].insertAdjacentHTML('afterbegin', tri(7))
  }
}
customElements.define('research-pane', ResearchPane)

class WordStatus extends HTMLElement {
  constructor() {
    super()
    this.attachShadow({ mode: 'open' })
    this.shadowRoot.innerHTML = `
      <style>
        :host{ display:flex; flex:none; align-items:center; height:19px; box-sizing:border-box; background:#f3f3f3; border-top:1px solid #c6c6c6; color:#444; white-space:nowrap; padding:1px 0 0 6px; }
        .lay{ background:#c6c6c6; width:40px; height:18px; display:flex; align-items:center; justify-content:center; margin-left:14px; }
        .slider{ width:100px; height:1px; background:#444; position:relative; margin-left:5px; flex:none; }
        .slider b{ position:absolute; left:43px; top:-5px; width:5px; height:11px; background:#444; }
        .slider i{ position:absolute; left:49px; top:-3px; width:1px; height:7px; background:#444; }
        .z{ display:inline-block; width:9px; text-align:center; }
      </style>
      <span style="width:109px;word-spacing:1.200px">第 2 页，共 4 页</span>
      <span style="width:93px">1254 个字</span>
      <span style="width:74px">修订: 关闭</span>
      <span style="width:41px">插入</span>
      <rb-icon name="proof" style="margin-right:19px"></rb-icon>
      <rb-icon name="a11y"></rb-icon>
      <span style="width:95px">辅助功能: 不可用</span>
      <rb-icon name="read" style="margin-left:575px"></rb-icon>
      <div class="lay"><rb-icon name="layout"></rb-icon></div>
      <rb-icon name="web" style="margin-left:12px"></rb-icon>
      <span class="z" style="margin-left:19px">−</span>
      <div class="slider"><b></b><i></i></div>
      <span class="z" style="margin-left:4px">+</span>
      <span style="margin-left:15px">90%</span>`
  }
}
customElements.define('word-status', WordStatus)
</script>
</body>
</html>
